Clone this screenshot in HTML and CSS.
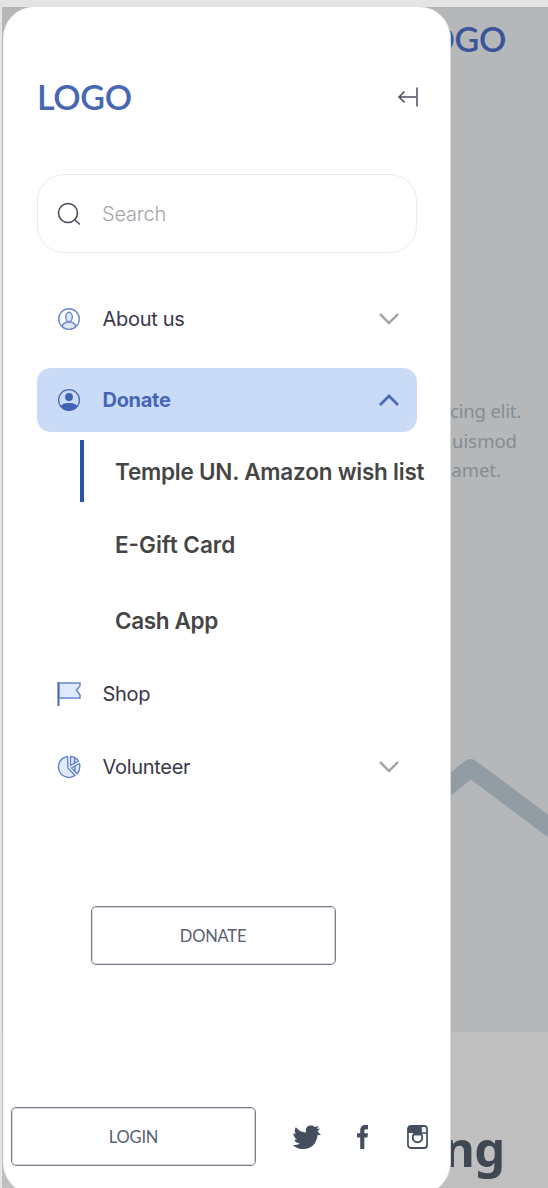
FILE: index.html
```html
<!DOCTYPE html>
<html lang="en">
<head>
<meta charset="utf-8">
<title>Navigation drawer</title>
<link rel="stylesheet" href="styles.css">
</head>
<body>
<div class="frame">
  <main class="page">
    <section class="hero">
      <div class="page-logo">LOGO</div>
      <div class="intro"><span class="line-a">cing elit.</span><span class="line-b">uismod</span><span class="line-c">amet.</span></div>
      <svg class="roof" viewBox="0 0 118 110"><path d="M-20 85.600 L40.500 36 L130 103" fill="none" stroke="#929ca3" stroke-width="18" stroke-linejoin="round"/></svg>
    </section>
    <section class="next"><h2 class="next-title">ng</h2></section>
  </main>
  <aside class="drawer">
    <header class="head">
      <span class="logo">LOGO</span>
      <svg class="collapse" width="22" height="22" viewBox="0 0 22 22" fill="none" stroke="#4b4a5c" stroke-width="1.500"><path d="M20 1.500v19M19 11H2M7.500 5.500L2 11l5.500 5.500"/></svg>
    </header>
    <div class="search">
      <svg class="icon" viewBox="0 0 24 24" fill="none" stroke="#4b4a5c" stroke-width="1.600"><circle cx="11" cy="11" r="9.500"/><path d="M17.500 17.500l5.500 5"/></svg>
      <span class="placeholder">Search</span>
    </div>
    <nav class="menu">
      <a class="item">
        <svg class="icon" viewBox="0 0 24 24" fill="none" stroke="#6c8acb" stroke-width="1.400"><circle cx="12" cy="12" r="10.300"/><path d="M5 19.500c.5-2.500 2.500-3.700 5-4.500h4c2.500.8 4.500 2 5 4.500-4 3.800-10 3.800-14 0z" fill="#dfe7fa"/><ellipse cx="12" cy="10" rx="3.300" ry="4.700" fill="#dfe7fa"/></svg>
        <span class="label">About us</span>
        <svg class="chevron" viewBox="0 0 22 14"><path d="M2 2l9 9 9-9"/></svg>
      </a>
      <a class="item active">
        <svg class="icon" viewBox="0 0 24 24"><circle cx="12" cy="12" r="10.400" fill="none" stroke="#4967b7" stroke-width="1.300"/><circle cx="12" cy="9" r="3.900" fill="#4262b4"/><path d="M3.500 18.500c2-3 4.500-3.500 8.500-3.500s6.500.5 8.500 3.500c-4 5.500-13 5.500-17 0z" fill="#4262b4"/></svg>
        <span class="label">Donate</span>
        <svg class="chevron" viewBox="0 0 22 14"><path d="M2 12l9-9 9 9"/></svg>
      </a>
      <div class="submenu">
        <a class="sub current"><span class="wish">Temple UN. Amazon wish list</span></a>
        <a class="sub"><span class="gift">E-Gift Card</span></a>
        <a class="sub"><span class="cash">Cash App</span></a>
      </div>
      <a class="item shop-row">
        <svg class="icon" viewBox="0 0 24 24" fill="#e1e9fc" stroke="#6685c9" stroke-width="1.500"><path d="M1.500 1h21.500v3l-3.500 4 3.500 5v3H1.500z"/><path d="M1.500 0v24" stroke="#4868b9" stroke-width="2"/></svg>
        <span class="label">Shop</span>
      </a>
      <a class="item">
        <svg class="icon" viewBox="0 0 24 24" fill="#e1e9fc" stroke="#6483c8" stroke-width="1.400"><path d="M10.500 1.500a10.500 10.500 0 1 0 7.500 19L11 13z"/><path d="M13.500 1.500v9l8-4.500c-1.500-2.500-4.500-4.300-8-4.500zM22.500 8.500L14.500 13l5.500 6c2.300-2.800 3.400-6.500 2.500-10.500z"/><path d="M17.500 3.200v5M18 11v5.500"/></svg>
        <span class="label">Volunteer</span>
        <svg class="chevron" viewBox="0 0 22 14"><path d="M2 2l9 9 9-9"/></svg>
      </a>
    </nav>
    <button class="button give">DONATE</button>
    <footer class="foot">
      <button class="button">LOGIN</button>
      <div class="social">
        <svg width="29" height="26" viewBox="0 0 30 26" fill="#454e5e"><path d="M4 3c3.500 4 6.500 5 10.500 5.500C13.500 3.500 16 1 19.500 1c2 0 3 .5 4.300 1.700L27.500 1.500 26 4.800l3-.6-2.500 3.200L30 11h-3.500C25.500 20 20 25.500 12 25.500c-4 0-8-1.200-11-4 3.500 0 5-.5 7-2-3.500-.2-5-2-5.500-4H5C2 13 1.500 11 1.500 9L4 10C2.500 7.500 2.500 5 4 3z"/></svg>
        <svg class="facebook" width="11" height="24" viewBox="0 0 12 24" preserveAspectRatio="none" fill="#454e5e"><path d="M3.500 24V12.500H0V8.300h3.500V5.500C3.500 2 5.500 0 8.800 0H12v4.200H9.800C8.300 4.200 8 5 8 6v2.300h4l-.6 4.200H8V24z"/></svg>
        <svg width="21" height="24" viewBox="0 0 22 24" preserveAspectRatio="none"><rect x="1" y="1" width="20" height="22" rx="3" fill="#fff" stroke="#454e5e" stroke-width="1.800"/><path d="M1 8V3q0-2 2-2h12.500v7z" fill="#454e5e"/><path d="M15.500 8h5.500" stroke="#454e5e" stroke-width="1.500"/><circle cx="11" cy="12.200" r="5" fill="#fff" stroke="#454e5e" stroke-width="2"/><path d="M7 6.500h8v4H7z" fill="#454e5e"/><rect x="16" y="2.800" width="3.800" height="4" fill="#e6e8eb"/></svg>
      </div>
    </footer>
  </aside>
</div>
</body>
</html>
```
FILE: styles.css
```css
* { box-sizing: border-box; }
body { margin: 0; background: #e4e4e4; font-family: Inter, sans-serif; }
.frame { position: relative; width: 548px; height: 1188px; padding: 7px 0 0 2px; overflow: hidden; }
.page { height: 1181px; display: flex; flex-direction: column; background: #bfbfbf; }
.hero { height: 1025px; flex: none; display: flex; flex-direction: column; align-items: flex-end; background: #b5b7b8; }
.page-logo { height: 66px; padding-right: 42px; font: 600 34px/64px Lato, sans-serif; color: #3b549a; letter-spacing: -0.3px; }
.intro { display: flex; flex-direction: column; align-items: flex-end; margin-top: 323px; font: 400 18.5px/29.5px "Noto Sans", sans-serif; color: #858c92; white-space: nowrap; }
.line-a { padding-right: 27px; letter-spacing: -0.2px; }
.line-b { padding-right: 31px; }
.line-c { padding-right: 47px; }
.roof { width: 118px; height: 110px; flex: none; margin-top: 247px; display: block; }
.next { padding-left: 441px; }
.next-title { margin: 82px 0 0; font: 700 49px/68px "Noto Sans", sans-serif; color: #3f4852; letter-spacing: -0.5px; }

.drawer { position: absolute; left: 3px; top: 7px; width: 448px; height: 1187px; padding: 0 33px; border-radius: 31px; background: #fff; border-left: 1px solid #f4f4f4; border-right: 1px solid #d5d7d7; display: flex; flex-direction: column; }
.head { height: 78px; margin-top: 51px; flex: none; display: flex; align-items: center; justify-content: space-between; }
.logo { padding-bottom: 1px; font: 600 34px/40px Lato, sans-serif; color: #4766b4; letter-spacing: -0.3px; }
.collapse { margin-right: -2px; }
.search { width: 380px; height: 79px; margin: 38px 0 0 -0.5px; flex: none; display: flex; align-items: center; border: 1px solid #ebebeb; border-radius: 27px; padding-left: 19.5px; }
.icon { width: 24px; height: 24px; flex: none; overflow: visible; }
.placeholder { margin-left: 21px; font-size: 20px; font-weight: 300; letter-spacing: -0.2px; color: #a4a4a9; }
.menu { width: 380.5px; margin: 34px 0 0 -0.5px; display: flex; flex-direction: column; }
.item { height: 64px; display: flex; align-items: center; padding: 0 17px 0 20.5px; border-radius: 14px; }
.label { margin-left: 21.5px; font-size: 20px; font-weight: 400; letter-spacing: -0.3px; color: #39374a; white-space: nowrap; }
.active { margin-top: 17px; background: #c9dbf7; }
.active .label { font-weight: 700; color: #4865b5; }
.chevron { width: 22px; height: 14px; margin-left: auto; fill: none; stroke: #a0a0a4; stroke-width: 2.4; }
.active .chevron { stroke: #4b68b7; stroke-width: 2.7; }
.submenu { margin: 8px 0 11px 43.5px; display: flex; flex-direction: column; gap: 12.5px; }
.sub { height: 62px; display: flex; align-items: center; padding-left: 31px; border-left: 4px solid transparent; font-size: 22.5px; font-weight: 560; color: #454545; white-space: nowrap; }
.wish { letter-spacing: -0.22px; }
.gift { padding-bottom: 2px; letter-spacing: 0; }
.cash { letter-spacing: -0.35px; }
.current { border-color: #2653ae; }
.shop-row { margin-bottom: 9px; }
.button { width: 245px; height: 59px; flex: none; padding: 2px 0 0; background: #fff; border: 1.5px solid #777c8b; border-radius: 5px; outline: 0.5px solid #d5d7dc; outline-offset: -2px; font: 400 16.5px/1 Lato, sans-serif; letter-spacing: -0.2px; color: #586071; }
.give { margin: 107px 0 0 53.5px; }
.foot { margin: 142px 0 0 -26px; width: 417px; display: flex; align-items: center; }
.social { width: 136px; margin-left: auto; display: flex; align-items: center; justify-content: space-between; }
.facebook { margin-right: 4px; }
```
